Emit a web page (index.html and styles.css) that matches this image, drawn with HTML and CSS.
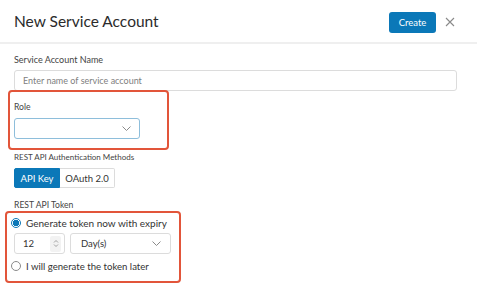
FILE: index.html
```html
<!DOCTYPE html>
<html>
<head>
<meta charset="utf-8">
<link rel="stylesheet" href="styles.css">
</head>
<body>
<div class="modal">
  <header class="head">
    <h1 class="title">New Service Account</h1>
    <div class="actions">
      <button class="btn-create">Create</button>
      <svg class="close" width="10" height="10" viewBox="0 0 10 10"><path d="M1 1L9 9M9 1L1 9" stroke="#8a8a8a" stroke-width="1.1" fill="none"/></svg>
    </div>
  </header>
  <div class="content">
    <div class="label l-name">Service Account Name</div>
    <div class="input text-input">Enter name of service account</div>

    <div class="mark mark-role">
      <div class="label l-role">Role</div>
      <div class="input select role-select">
        <span></span>
        <svg class="chev" width="9" height="5" viewBox="0 0 9 5"><path d="M0.5 0.5L4.5 4.5L8.5 0.5" stroke="#8a8a8a" stroke-width="1" fill="none"/></svg>
      </div>
    </div>

    <div class="label l-auth">REST API Authentication Methods</div>
    <div class="seg">
      <div class="seg-btn active">API Key</div>
      <div class="seg-btn">OAuth 2.0</div>
    </div>

    <div class="label l-token">REST API Token</div>
    <div class="mark mark-token">
      <div class="radio-row r1">
        <span class="radio on"></span>
        <span>Generate token now with expiry</span>
      </div>
      <div class="expiry">
        <div class="input num">
          <span>12</span>
          <span class="spin">
            <svg width="6" height="9" viewBox="0 0 6 9"><path d="M1 3.5L3 1.5L5 3.5M1 5.5L3 7.5L5 5.5" stroke="#8a8a8a" stroke-width="0.8" fill="none"/></svg>
          </span>
        </div>
        <div class="input select unit">
          <span>Day(s)</span>
          <svg class="chev" width="9" height="5" viewBox="0 0 9 5"><path d="M0.5 0.5L4.5 4.5L8.5 0.5" stroke="#8a8a8a" stroke-width="1" fill="none"/></svg>
        </div>
      </div>
      <div class="radio-row r2">
        <span class="radio"></span>
        <span>I will generate the token later</span>
      </div>
    </div>
  </div>
</div>
</body>
</html>
```
FILE: styles.css
```css
* { box-sizing: border-box; }
html, body { margin: 0; padding: 0; background: #fff; }
body {
  font-family: Lato, "Open Sans", sans-serif;
  color: #333;
  width: 477px;
  height: 302px;
  overflow: hidden;
}
.head {
  height: 44px;
  display: flex;
  align-items: center;
  justify-content: space-between;
  padding: 0 22px 0 14px;
  border-bottom: 2px solid #efefef;
}
.title {
  margin: 0;
  font-size: 15.5px;
  font-weight: 400;
  color: #2b2b2b;
}
.actions {
  display: flex;
  align-items: center;
  gap: 9px;
  position: relative;
  top: 1px;
}
.btn-create {
  font-family: Lato, sans-serif;
  background: #0b78b8;
  color: #fff;
  border: 0;
  border-radius: 3px;
  width: 47px;
  height: 21px;
  font-size: 9.5px;
  font-weight: 400;
  padding: 0;
}
.close { display: block; }
.content {
  padding: 0 20px 0 14px;
}
.label {
  font-size: 8.6px;
  color: #444;
  line-height: 11px;
}
.l-name { margin-top: 10px; font-size: 9px; }
.input {
  border: 1px solid #dcdcdc;
  border-radius: 3px;
  height: 21px;
  display: flex;
  align-items: center;
  font-size: 9px;
  background: #fff;
}
.text-input {
  margin-top: 5px;
  padding-left: 8px;
  color: #808080;
}
.mark {
  border: 2px solid #e2553a;
  border-radius: 4px;
}
.mark-role {
  margin: -1px 0 0 -6px;
  width: 161px;
  height: 60px;
  padding: 10px 0 0 4px;
}
.role-select {
  margin-top: 5px;
  width: 126px;
  border-color: #8ebedb;
  justify-content: space-between;
  padding: 0 8px 0 8px;
}
.chev { display: block; }
.l-auth { margin-top: 2px; font-size: 8px; }
.seg {
  margin-top: 5px;
  display: flex;
  height: 20px;
}
.seg-btn {
  font-size: 9.5px;
  display: flex;
  align-items: center;
  justify-content: center;
  border: 1px solid #dcdcdc;
  color: #333;
}
.seg-btn.active {
  width: 46px;
  background: #0b78b8;
  border-color: #0b78b8;
  color: #fff;
  border-radius: 2px 0 0 2px;
}
.seg-btn:last-child {
  width: 55px;
  border-left: 0;
  border-radius: 0 2px 2px 0;
}
.l-token { margin-top: 12px; }
.mark-token {
  margin: 0 0 0 -9px;
  width: 176px;
  height: 72px;
  padding: 3px 0 0 4px;
}
.radio-row {
  display: flex;
  align-items: center;
  gap: 5px;
  font-size: 10px;
  color: #333;
  height: 14px;
}
.r2 span:last-child { font-size: 9.6px; }
.radio {
  width: 10px;
  height: 10px;
  border-radius: 50%;
  border: 1px solid #8a8a8a;
  display: inline-block;
  flex: none;
}
.radio.on {
  border-color: #0b78b8;
  background: radial-gradient(circle, #0b78b8 0 3px, #fff 3.2px);
}
.expiry {
  margin-top: 3px;
  display: flex;
  gap: 5px;
  padding-left: 3px;
}
.num {
  width: 51px;
  height: 21px;
  padding-left: 8px;
  justify-content: space-between;
  padding-right: 3px;
  font-size: 9.5px;
}
.spin {
  width: 11px;
  height: 16px;
  background: #f2f2f2;
  border-radius: 2px;
  display: flex;
  align-items: center;
  justify-content: center;
}
.unit {
  width: 101px;
  height: 21px;
  justify-content: space-between;
  padding: 0 9px 0 10px;
  font-size: 9.5px;
}
.r2 { margin-top: 5px; }
```
